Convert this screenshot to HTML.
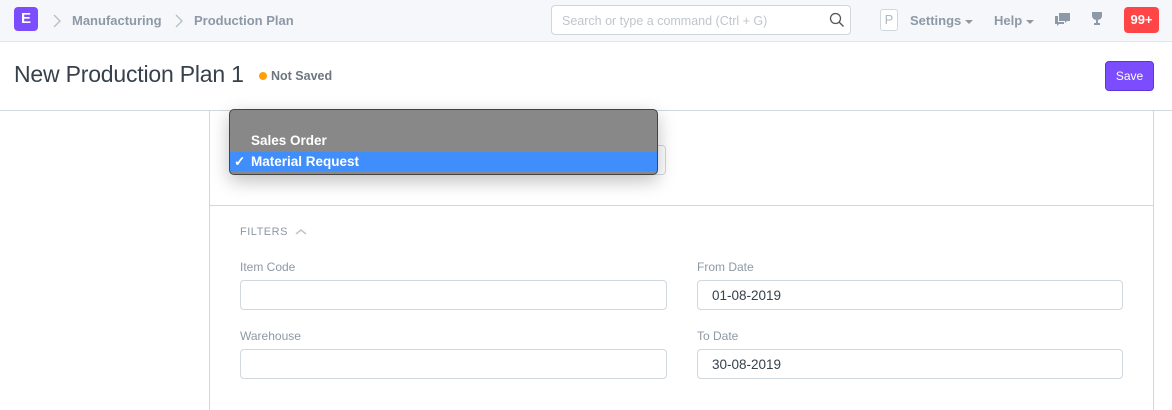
<!DOCTYPE html>
<html><head><meta charset="utf-8"><style>
*{box-sizing:border-box;margin:0;padding:0}
body{width:1172px;height:400px;overflow:hidden;background:#fff;font-family:"Liberation Sans",sans-serif;position:relative}
.nav{position:absolute;left:0;top:0;width:1172px;height:42px;background:#f5f7fa;border-bottom:1px solid #e2e6ec}
.abs{position:absolute}
.logo{left:14px;top:7px;width:24px;height:24px;background:#7c4dff;border-radius:4px;color:#fff;font-weight:bold;font-size:15px;text-align:center;line-height:24px}
.crumb{font-size:13px;font-weight:bold;color:#8d99a6;top:13px}
.search{left:551px;top:5px;width:300px;height:30px;border:1px solid #d1d8dd;border-radius:4px;background:#fff;font-size:12.5px;color:#c0c6cc;padding:8px 10px}
.navt{font-size:13px;font-weight:bold;color:#8d99a6;top:13px}
.caret{display:inline-block;border-left:4px solid transparent;border-right:4px solid transparent;border-top:4px solid #8d99a6;vertical-align:middle;margin-left:4px}
.badge{left:1124px;top:7px;width:35px;height:26px;background:#ff4545;border-radius:4px;color:#fff;font-size:13px;font-weight:bold;text-align:center;line-height:26px}
.title{left:14px;top:61px;font-size:23px;color:#36414c;letter-spacing:-0.2px}
.ns{top:69px;font-size:12.5px;font-weight:bold;color:#6c7680}
.dot{left:259px;top:72px;width:8px;height:8px;border-radius:50%;background:#ffa00a}
.save{left:1105px;top:61px;width:49px;height:30px;background:#7c4dff;border:1px solid #5e35d8;border-radius:4px;color:#fff;font-size:12px;text-align:center;line-height:28px}
.hline{left:0;top:110px;width:1172px;height:1px;background:#d1d8dd}
.card{left:209px;top:110px;width:945px;height:300px;border-left:1px solid #d1d8dd;border-right:1px solid #d1d8dd}
.div{left:210px;top:205px;width:943px;height:1px;background:#d1d8dd}
.inp{height:30px;border:1px solid #d1d8dd;border-radius:4px;background:#fff;font-size:13.5px;color:#36414c;padding:7px 14px}
.lbl{font-size:12px;color:#8d99a6}
.dd{left:229px;top:109px;width:429px;height:66px;background:#888;border:1px solid #444;border-radius:5px;box-shadow:0 6px 18px rgba(0,0,0,.25);overflow:hidden}
.dd div{position:absolute;left:0;width:100%;color:#fff;font-size:13.5px;font-weight:bold;padding-left:21px}
</style></head><body>
<div class="nav"></div>
<div class="abs logo">E</div>
<svg class="abs" style="left:52px;top:13px" width="10" height="16"><path d="M2 2l6 6-6 6" stroke="#b5bdc5" stroke-width="1.3" fill="none"/></svg>
<div class="abs crumb" style="left:72px">Manufacturing</div>
<svg class="abs" style="left:174px;top:13px" width="10" height="16"><path d="M2 2l6 6-6 6" stroke="#b5bdc5" stroke-width="1.3" fill="none"/></svg>
<div class="abs crumb" style="left:194px">Production Plan</div>
<div class="abs search">Search or type a command (Ctrl + G)</div>
<svg class="abs" style="left:829px;top:12px" width="16" height="16"><circle cx="6.5" cy="6.5" r="5" stroke="#555" stroke-width="1.3" fill="none"/><path d="M10 10l4.5 4.5" stroke="#555" stroke-width="1.4"/></svg>
<div class="abs" style="left:880px;top:9px;width:18px;height:22px;border:1px solid #d1d8dd;border-radius:3px;background:#fff;color:#b0b8c0;font-size:13px;text-align:center;line-height:20px">P</div>
<div class="abs navt" style="left:910px">Settings<span class="caret"></span></div>
<div class="abs navt" style="left:994px">Help<span class="caret"></span></div>
<svg class="abs" style="left:1054px;top:12px" width="18" height="16"><path d="M5 1h11v8h-3l-2 2V9H5z" fill="#8d99a6"/><path d="M1 4h3v6h6v2H5l-2 2v-2H1z" fill="#8d99a6"/></svg>
<svg class="abs" style="left:1090px;top:11px" width="14" height="16"><path d="M2 1h10v4a5 4 0 0 1-10 0z" fill="#8d99a6"/><path d="M6 9h2v3h2v2H4v-2h2z" fill="#8d99a6"/></svg>
<div class="abs badge">99+</div>
<div class="abs title">New Production Plan 1</div>
<div class="abs dot"></div><div class="abs ns" style="left:271px">Not Saved</div>
<div class="abs save">Save</div>
<div class="abs hline"></div>
<div class="abs card"></div>
<div class="abs inp" style="left:240px;top:145px;width:426px"></div>
<div class="abs div"></div>
<div class="abs lbl" style="left:240px;top:226px;font-size:11px;letter-spacing:.5px">FILTERS</div>
<svg class="abs" style="left:295px;top:228px" width="12" height="8"><path d="M1 6l5-4 5 4" stroke="#c0c6cc" stroke-width="1.6" fill="none"/></svg>
<div class="abs lbl" style="left:240px;top:260px">Item Code</div>
<div class="abs inp" style="left:240px;top:280px;width:427px"></div>
<div class="abs lbl" style="left:240px;top:329px">Warehouse</div>
<div class="abs inp" style="left:240px;top:349px;width:427px"></div>
<div class="abs lbl" style="left:697px;top:260px">From Date</div>
<div class="abs inp" style="left:697px;top:280px;width:426px">01-08-2019</div>
<div class="abs lbl" style="left:697px;top:329px">To Date</div>
<div class="abs inp" style="left:697px;top:349px;width:426px">30-08-2019</div>
<div class="abs dd">
<div style="top:23px">Sales Order</div>
<div style="top:42px;height:19px;background:#3f8efc;line-height:19px">Material Request</div>
<div style="top:42px;height:19px;line-height:19px;padding-left:4px;width:20px">✓</div>
</div>
</body></html>
